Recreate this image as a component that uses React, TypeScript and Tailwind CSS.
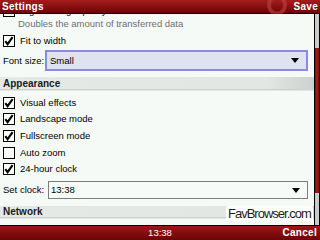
import React from 'react';

const Check = ({ checked }: { checked: boolean }) => (
  <svg width="12" height="12" viewBox="0 0 12 12" className="shrink-0">
    <rect x="0.5" y="0.5" width="11" height="11" fill="#ffffff" stroke="#000000" />
    {checked && (
      <path d="M2.3 6.2 L4.6 9.2 L9.6 2.2" fill="none" stroke="#000000" strokeWidth="2.1" strokeLinejoin="miter" />
    )}
  </svg>
);

const Arrow = () => (
  <svg width="8" height="5" viewBox="0 0 8 5" className="shrink-0">
    <path d="M0 0 H8 L4 5 Z" fill="#000000" />
  </svg>
);

const CheckRow = ({ label, checked, h }: { label: string; checked: boolean; h: string }) => (
  <div className={`flex items-center gap-[5px] ${h}`}>
    <Check checked={checked} />
    <span className="text-[9.5px] leading-none text-black">{label}</span>
  </div>
);

const SectionHead = ({ title, h }: { title: string; h: string }) => (
  <div className="-ml-[3px] -mr-[6px]">
    <div className={`${h} flex items-center pl-[3px] bg-gradient-to-r from-[#e5e9e6] via-[#e3e7e4] via-85% to-[#cdd0ce] text-[10px] font-bold text-[#1a1a1a]`}>
      {title}
    </div>
    <div className="h-[2px] bg-gradient-to-b from-[#c4c8c6] to-[#eef2ef]" />
  </div>
);

export default function App() {
  return (
    <div
      className="w-[320px] h-[240px] flex flex-col overflow-hidden bg-[#f5faf7]"
      style={{ fontFamily: '"Liberation Sans", Arial, sans-serif' }}
    >
      {/* title bar */}
      <div className="relative h-[14px] shrink-0 flex items-center justify-between px-[2px] bg-gradient-to-b from-[#a51d1d] to-[#6c0404] border-b border-black text-white text-[10px] font-bold leading-none tracking-[0.3px] z-10">
        <span>Settings</span>
        <svg className="absolute left-[266px] top-[-4px]" width="22" height="18" viewBox="0 0 22 18">
          <ellipse cx="11" cy="9" rx="8" ry="8.5" fill="none" stroke="#c24848" strokeOpacity="0.55" strokeWidth="4" />
        </svg>
        <span className="relative">Save</span>
      </div>

      {/* body */}
      <div className="flex-1 flex min-h-0">
        <div className="relative flex-1 overflow-hidden pl-[3px] pr-[6px] flex flex-col">
          <div className="-mt-[10px]">
            <CheckRow label="Higher image quality" checked={false} h="h-[13px]" />
          </div>
          <div className="mt-[1px] h-[12px] flex items-center pl-[15px] text-[9.5px] text-[#6f6f6f] leading-none">
            Doubles the amount of transferred data
          </div>
          <div className="mt-[3px]">
            <CheckRow label="Fit to width" checked h="h-[16px]" />
          </div>
          <div className="mt-[1px] h-[21px] flex items-center">
            <span className="w-[42px] text-[9.5px] text-black leading-none">Font size:</span>
            <div className="flex-1 h-full flex items-center justify-between pl-[3px] pr-[7px] bg-[#dfe3f0] border-2 border-[#8a8ae4] text-[9.5px] leading-none text-black">
              <span>Small</span>
              <Arrow />
            </div>
          </div>

          <div className="mt-[6px]">
            <SectionHead title="Appearance" h="h-[12px]" />
          </div>

          <div className="mt-[3px]">
            <CheckRow label="Visual effects" checked h="h-[17px]" />
            <CheckRow label="Landscape mode" checked h="h-[16px]" />
            <CheckRow label="Fullscreen mode" checked h="h-[17px]" />
            <CheckRow label="Auto zoom" checked={false} h="h-[17px]" />
            <CheckRow label="24-hour clock" checked h="h-[16px]" />
          </div>

          <div className="mt-[4px] h-[18px] flex items-center">
            <span className="w-[45px] text-[9.5px] text-black leading-none">Set clock:</span>
            <div className="flex-1 h-full flex items-center justify-between pl-[2px] pr-[7px] bg-[#f7fbf8] border border-[#7d7d7d] text-[9.5px] leading-none text-black">
              <span>13:38</span>
              <Arrow />
            </div>
          </div>

          <div className="mt-[7px]">
            <SectionHead title="Network" h="h-[11px]" />
          </div>

          <div className="absolute left-[226px] top-[192px] h-[15px] px-[2px] flex items-center bg-white rounded-[2px] text-[13px] leading-none tracking-[-1px] text-[#1c1c1c]">
            FavBrowser.com
          </div>
        </div>

        {/* scrollbar */}
        <div className="w-[6px] shrink-0 flex flex-col bg-[#c9cbca] border-l-[1.5px] border-r border-black">
          <div className="mt-[34px] h-[145px] bg-gradient-to-r from-[#7a0808] via-[#b31c1c] to-[#7a0808]" />
        </div>
      </div>

      {/* soft key bar */}
      <div className="h-[15px] shrink-0 flex items-center border-t border-black bg-gradient-to-b from-[#9e1616] to-[#6a0505] text-white leading-none">
        <span className="w-[40px]" />
        <span className="flex-1 text-center text-[9.5px]">13:38</span>
        <span className="w-[40px] text-right pr-[3px] text-[10px] font-bold tracking-[0.3px]">Cancel</span>
      </div>
    </div>
  );
}
